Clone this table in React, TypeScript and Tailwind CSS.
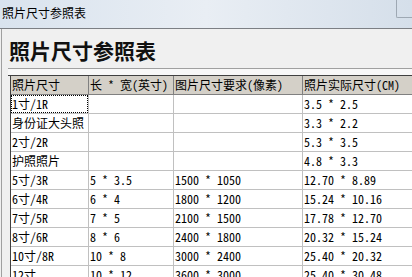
import React from "react";

const mono = {
  fontFamily:
    '"Noto Sans Mono CJK SC", "Liberation Mono", "Noto Sans CJK SC", monospace',
};

const headers = ["照片尺寸", "长 * 宽(英寸)", "图片尺寸要求(像素)", "照片实际尺寸(CM)"];

const rows: string[][] = [
  ["1寸/1R", "", "", "3.5 * 2.5"],
  ["身份证大头照", "", "", "3.3 * 2.2"],
  ["2寸/2R", "", "", "5.3 * 3.5"],
  ["护照照片", "", "", "4.8 * 3.3"],
  ["5寸/3R", "5 * 3.5", "1500 * 1050", "12.70 * 8.89"],
  ["6寸/4R", "6 * 4", "1800 * 1200", "15.24 * 10.16"],
  ["7寸/5R", "7 * 5", "2100 * 1500", "17.78 * 12.70"],
  ["8寸/6R", "8 * 6", "2400 * 1800", "20.32 * 15.24"],
  ["10寸/8R", "10 * 8", "3000 * 2400", "25.40 * 20.32"],
  ["12寸", "10 * 12", "3600 * 3000", "25.40 * 30.48"],
];

export default function App() {
  return (
    <div
      className="relative w-[412px] h-[277px] overflow-hidden bg-[#f0f0f0]"
      style={{ fontFamily: '"Noto Sans CJK SC", "Noto Sans", sans-serif' }}
    >
      {/* window caption */}
      <div className="h-[29px] border-b border-[#7c7f84] bg-gradient-to-r from-[#d9e3ee] via-[#e9eef4] to-[#d5dfea] pl-[2px] flex items-center">
        <span className="text-[12px] leading-none text-black pb-[3px]">照片尺寸参照表</span>
      </div>
      <div className="absolute left-[396px] top-0 w-[18px] h-[18px] border-l border-b border-[#9ea8b3] rounded-bl-[2px]" />

      {/* page body */}
      <div className="border-l border-[#a0a0a0] ml-[1px] h-full">
        <div className="pl-[7px] pt-[9px]">
          <h1 className="text-[21px] leading-[24px] font-bold text-[#111] tracking-[0px]">
            照片尺寸参照表
          </h1>
        </div>
        <div className="mt-[6px] ml-[6px] border-t border-[#a0a0a0] h-[8px] bg-[#f8f8f8] border-b border-b-[#404040]" />

        <div className="ml-[8px] border-l border-[#404040]" style={mono}>
          <div className="grid grid-cols-[78px_85px_129px_110px]">
            {headers.map((h) => (
              <div
                key={h}
                className="h-[19px] bg-[#d4d0c8] border-r border-b border-[#808080] pl-[1px] flex items-center text-[12px] leading-none text-black whitespace-nowrap overflow-hidden"
              >
                {h}
              </div>
            ))}
            {rows.map((r, i) =>
              r.map((c, j) => (
                <div
                  key={`${i}-${j}`}
                  className="relative h-[19px] bg-white border-r border-b border-[#c0c0c0] pl-[1px] flex items-center text-[12px] leading-none text-black whitespace-nowrap overflow-hidden"
                >
                  {i === 0 && j === 0 && (
                    <span className="absolute inset-0 border border-dotted border-black" />
                  )}
                  {c}
                </div>
              ))
            )}
          </div>
        </div>
      </div>
    </div>
  );
}
